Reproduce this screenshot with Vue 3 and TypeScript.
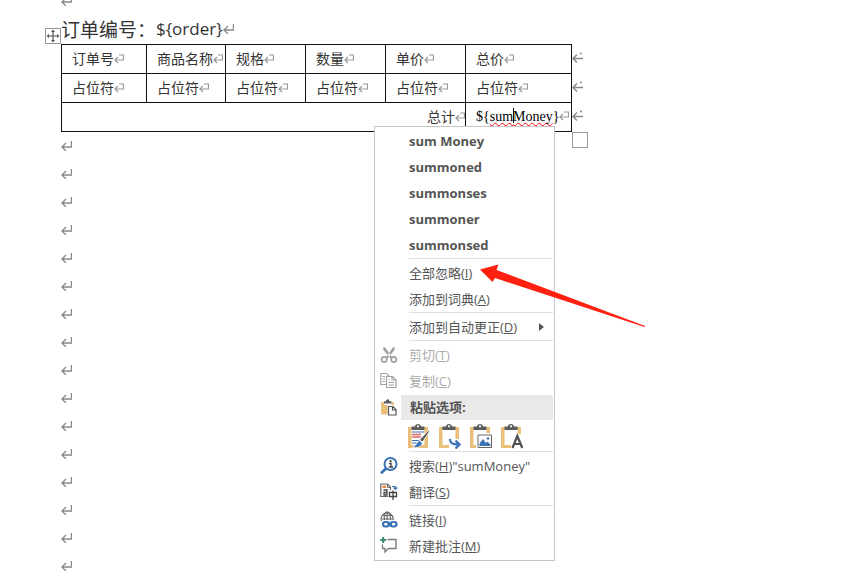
<script setup lang="ts">
interface MenuEntry {
  label: string
  accel?: string
  tail?: string
  icon?: 'cut' | 'copy' | 'search' | 'translate' | 'link' | 'comment'
  disabled?: boolean
  submenu?: boolean
}

const headers: string[] = ['订单号', '商品名称', '规格', '数量', '单价', '总价']
const placeholder = '占位符'
const orderField = '${order}'
const emptyParagraphs = 16

const suggestions: string[] = ['sum Money', 'summoned', 'summonses', 'summoner', 'summonsed']

const spelling: MenuEntry[] = [
  { label: '全部忽略', accel: 'I' },
  { label: '添加到词典', accel: 'A' },
]
const autoCorrect: MenuEntry[] = [{ label: '添加到自动更正', accel: 'D', submenu: true }]
const clipboard: MenuEntry[] = [
  { label: '剪切', accel: 'T', icon: 'cut', disabled: true },
  { label: '复制', accel: 'C', icon: 'copy', disabled: true },
]
const lookup: MenuEntry[] = [
  { label: '搜索', accel: 'H', tail: '"sumMoney"', icon: 'search' },
  { label: '翻译', accel: 'S', icon: 'translate' },
]
const insert: MenuEntry[] = [
  { label: '链接', accel: 'I', icon: 'link' },
  { label: '新建批注', accel: 'M', icon: 'comment' },
]

const upperGroups: MenuEntry[][] = [spelling, autoCorrect, clipboard]
const lowerGroups: MenuEntry[][] = [lookup, insert]

const pasteOptions = [
  { id: 'source', name: '保留源格式' },
  { id: 'merge', name: '合并格式' },
  { id: 'picture', name: '图片' },
  { id: 'text', name: '只保留文本' },
]
</script>

<template>
  <div class="page">
    <svg class="symbols" aria-hidden="true">
      <symbol id="para-mark" viewBox="0 0 11 10">
        <path d="M10.500 0V6H1M5 2L1 6L5 10" fill="none" stroke="#8a8a8a" stroke-width="1.400" />
      </symbol>
      <symbol id="cell-mark" viewBox="0 0 10 10">
        <path d="M5 1H9.500V6H1M4 3L1 6L4 9" fill="none" stroke="#999" stroke-width="1.200" />
      </symbol>
      <symbol id="row-mark" viewBox="0 0 12 12">
        <path d="M1 6.500H11M5 2.500L1 6.500L5 10.500M8 1.500H10" fill="none" stroke="#888" stroke-width="1.400" />
      </symbol>
      <symbol id="icon-cut" viewBox="0 0 18 18">
        <path d="M3.200 1L5.200 1.500L12.200 11.500L10.500 12.500L3.500 4ZM14.800 1L12.800 1.500L5.800 11.500L7.500 12.500L14.500 4Z" fill="#a0a0a0" />
        <g fill="none" stroke="#a0a0a0" stroke-width="1.600">
          <circle cx="4.200" cy="13.500" r="2.600" />
          <circle cx="13.800" cy="13.500" r="2.600" />
        </g>
      </symbol>
      <symbol id="icon-copy" viewBox="0 0 18 18">
        <g fill="#fff" stroke="#a3a3a3" stroke-width="1.200">
          <path d="M0.800 1.500H6.500L9.500 4.500V12.500H0.800Z" />
          <path d="M2.500 4.500H5M2.500 7H5M2.500 9.500H5" />
          <path d="M6.500 4.500H12.500L16 8V15.500H6.500Z" />
          <path d="M12 4.500V8H16M8.500 8H10M8.500 10.500H14M8.500 13H14" fill="none" />
        </g>
      </symbol>
      <symbol id="icon-search" viewBox="0 0 18 18">
        <circle cx="10.500" cy="7" r="6" fill="#fff" stroke="#3b73b5" stroke-width="2" />
        <path d="M6.300 11.200L1 16.200" stroke="#3b73b5" stroke-width="2.800" />
        <path d="M9 6.500H11V10M8.800 10H13" fill="none" stroke="#444" stroke-width="1.400" />
        <circle cx="10.600" cy="4.200" r="1.100" fill="#444" />
      </symbol>
      <symbol id="icon-translate" viewBox="0 0 18 18">
        <path d="M8 13.500H0.800V1H7.500L10.500 4V7" fill="#fff" stroke="#666" stroke-width="1.200" />
        <path d="M2.500 2.500H6V5H2.500Z" fill="#e8843c" />
        <path d="M7.500 1V4.500H10.500" fill="none" stroke="#666" />
        <path d="M3.500 7H7V12H4V9.500H7" fill="none" stroke="#444" stroke-width="1.300" />
        <path d="M12 3.500H15.500V6M13.500 4.500L15.500 6.500L17.300 4.500" fill="none" stroke="#3b73b5" stroke-width="1.200" />
        <path d="M9.500 9.500H16.500V13.500H9.500ZM13 7.500V17" fill="#fff" stroke="#444" stroke-width="1.300" />
      </symbol>
      <symbol id="icon-link" viewBox="0 0 18 18">
        <g fill="none" stroke="#666" stroke-width="1.100">
          <path d="M1.500 10A6 6 0 1 1 13 9" />
          <path d="M4.500 9C3.500 5 5 0.800 7.200 0.800S11 5 10.300 9M2 4.500H12.500M1.500 8H13M7.200 1V9" />
        </g>
        <g fill="none" stroke="#fff" stroke-width="4">
          <rect x="3" y="11" width="6" height="4.500" rx="2.200" />
          <rect x="10.500" y="11" width="6" height="4.500" rx="2.200" />
        </g>
        <g fill="none" stroke="#3b73b5" stroke-width="2.200">
          <rect x="3" y="11" width="6" height="4.500" rx="2.200" />
          <rect x="10.500" y="11" width="6" height="4.500" rx="2.200" />
          <path d="M7.500 13.200H12" />
        </g>
      </symbol>
      <symbol id="icon-comment" viewBox="0 0 18 18">
        <path d="M7.500 2.500H16V11.500H8.500L5 15V11.500H2.500V7.500" fill="none" stroke="#777" stroke-width="1.300" />
        <path d="M3.200 0V6M0.200 3H6.200" stroke="#3d8b6b" stroke-width="2" />
      </symbol>
      <symbol id="clipboard" viewBox="0 0 24 26">
        <path d="M1 4H21V25H1Z" fill="#eabf79" />
        <path d="M4.500 6H17.500V22H4.500Z" fill="#fff" />
        <path d="M4.500 7V3.500H8C8 0 14 0 14 3.500H17.500V7Z" fill="#5c5c5c" />
        <circle cx="11" cy="3.300" r="1.100" fill="#fff" />
      </symbol>
      <symbol id="icon-paste" viewBox="0 0 18 18">
        <path d="M1 3H14V15.500H1Z" fill="#eabf79" />
        <path d="M4 2H11.500V6H4Z" fill="#fff" />
        <path d="M4 4.500V2.300H6C6 -0.500 9.500 -0.500 9.500 2.300H11.500V4.500Z" fill="#5c5c5c" />
        <path d="M9 7.500H13L16 10.500V16H9Z" fill="#fff" stroke="#fff" stroke-width="3" />
        <path d="M8.500 7.500H13L16 10.500V16H8.500ZM12.500 7.500V11H16" fill="#fff" stroke="#555" stroke-width="1.200" />
      </symbol>
    </svg>

    <main class="document">
      <p class="paragraph first"><svg class="para-mark"><use href="#para-mark" /></svg></p>
      <h1 class="title">
        <span>订单编号：</span><span class="field">{{ orderField }}</span><svg class="para-mark"><use href="#para-mark" /></svg>
      </h1>

      <div class="table-area">
        <svg class="move-handle" viewBox="0 0 16 16" aria-hidden="true">
          <rect x="0.500" y="0.500" width="15" height="15" fill="#fff" stroke="#999" />
          <path d="M8 3V13M3 8H13" stroke="#555" stroke-width="1.200" />
          <path d="M8 1.500L10 4H6ZM8 14.500L10 12H6ZM1.500 8L4 6V10ZM14.500 8L12 6V10Z" fill="#555" />
        </svg>
        <table class="orders">
          <colgroup>
            <col class="c-order" /><col class="c-name" /><col class="c-mid" /><col class="c-mid" /><col class="c-mid" /><col />
          </colgroup>
          <thead>
            <tr>
              <th v-for="h in headers" :key="h" scope="col">{{ h }}<svg class="cell-mark"><use href="#cell-mark" /></svg></th>
            </tr>
          </thead>
          <tbody>
            <tr>
              <td v-for="h in headers" :key="h">{{ placeholder }}<svg class="cell-mark"><use href="#cell-mark" /></svg></td>
            </tr>
            <tr>
              <td colspan="5" class="total">总计<svg class="cell-mark"><use href="#cell-mark" /></svg></td>
              <td class="sum">${<span class="misspelled">sum<i class="caret"></i>Money</span>}<svg class="cell-mark"><use href="#cell-mark" /></svg></td>
            </tr>
          </tbody>
        </table>
        <div class="row-ends">
          <svg v-for="n in 3" :key="n" class="row-mark"><use href="#row-mark" /></svg>
        </div>
        <span class="resize-handle"></span>
      </div>

      <p v-for="n in emptyParagraphs" :key="n" class="paragraph"><svg class="para-mark"><use href="#para-mark" /></svg></p>
    </main>

    <div class="menu" role="menu">
      <button v-for="s in suggestions" :key="s" class="item suggestion" type="button" role="menuitem">
        <span class="icon"></span><span>{{ s }}</span>
      </button>

      <template v-for="(group, g) in upperGroups" :key="g">
        <hr class="separator" />
        <button v-for="e in group" :key="e.label" class="item" type="button" role="menuitem" :disabled="e.disabled">
          <svg v-if="e.icon" class="icon"><use :href="'#icon-' + e.icon" /></svg>
          <span v-else class="icon"></span>
          <span>{{ e.label }}(<u>{{ e.accel }}</u>)</span>
          <span v-if="e.submenu" class="chevron"></span>
        </button>
      </template>

      <div class="paste-heading">
        <svg class="icon"><use href="#icon-paste" /></svg>
        <span class="paste-title">粘贴选项:</span>
      </div>
      <div class="paste-options">
        <button v-for="p in pasteOptions" :key="p.id" class="paste" type="button" :aria-label="p.name">
          <svg viewBox="0 0 24 26">
            <use href="#clipboard" />
            <g v-if="p.id === 'source'">
              <path d="M5 9H17M5 17.500H13M5 20H11" stroke="#3b73b5" stroke-width="1.200" />
              <path d="M5 12L6.500 11L8 12L9.500 11L11 12L12.500 11L14 12M5 14.500L6.500 13.500L8 14.500L9.500 13.500L11 14.500L12.500 13.500L14 14.500" fill="none" stroke="#dc6262" stroke-width="1.200" />
              <path d="M23.500 7L15.500 19L12.500 17L21 8Z" fill="#555" stroke="#fff" stroke-width="0.800" />
              <path d="M12.500 17.500L15.500 20C14.500 24 10 25.500 5.500 24C9 23.500 9.500 19 12.500 17.500Z" fill="#3b73b5" stroke="#fff" stroke-width="0.800" />
            </g>
            <g v-else-if="p.id === 'merge'">
              <path d="M11 16H24V26H11Z" fill="#fff" />
              <path d="M12 16C12 20 14 21.500 20 21.500M17.500 17.500L21.500 21.500L17.500 25.500" fill="none" stroke="#3b73b5" stroke-width="2.300" />
            </g>
            <g v-else-if="p.id === 'picture'">
              <path d="M8.500 11.500H22.500V24.500H8.500Z" fill="#fff" stroke="#fff" stroke-width="3" />
              <path d="M9 12H22.500V24.500H9Z" fill="#fff" stroke="#666" />
              <path d="M10.500 23V20.500L14 16L17 20L18.500 18.500L21.500 21.500V23Z" fill="#3b73b5" />
              <circle cx="19" cy="15.500" r="1.300" fill="#3b73b5" />
            </g>
            <g v-else>
              <path d="M11 11H24V26H11Z" fill="#fff" />
              <path d="M12.500 25L17.300 13L22.300 25M14.300 21H20.500" fill="none" stroke="#4f4f4f" stroke-width="2.200" />
            </g>
          </svg>
        </button>
      </div>

      <template v-for="(group, g) in lowerGroups" :key="g">
        <hr class="separator" />
        <button v-for="e in group" :key="e.label" class="item" type="button" role="menuitem">
          <svg class="icon"><use :href="'#icon-' + e.icon" /></svg>
          <span>{{ e.label }}(<u>{{ e.accel }}</u>){{ e.tail }}</span>
        </button>
      </template>
    </div>

    <svg class="pointer" viewBox="0 0 166 64" aria-hidden="true">
      <path d="M0 5.500L18.500 0.500L16.500 6L165 62L164.500 63L15 14L12.500 18Z" fill="#ff2010" />
    </svg>
  </div>
</template>

<style>
body {
  margin: 0;
  background: #fff;
}
</style>

<style scoped>
.page {
  position: relative;
  height: 100vh;
  overflow: hidden;
  font-family: "Noto Sans CJK SC", sans-serif;
  color: #333;
}
.symbols {
  position: absolute;
  width: 0;
  height: 0;
}
.document {
  padding-left: 61px;
}
.paragraph {
  display: flex;
  align-items: center;
  height: 28px;
  margin: 0;
}
.paragraph.first {
  height: 18px;
  align-items: flex-start;
  margin-top: -4px;
}
.para-mark {
  width: 11px;
  height: 10px;
  flex: none;
}
.title {
  display: flex;
  align-items: center;
  height: 30px;
  margin: 0;
  font-size: 19px;
  font-weight: 400;
  line-height: 30px;
}
.field {
  font-family: "Open Sans", sans-serif;
  font-size: 17px;
}
.table-area {
  position: relative;
  display: flex;
}
.orders {
  width: 511px;
  table-layout: fixed;
  border-collapse: collapse;
  font-size: 14px;
  line-height: 26px;
}
.c-order {
  width: 85px;
}
.c-name {
  width: 79px;
}
.c-mid {
  width: 80px;
}
.orders th,
.orders td {
  height: 28px;
  padding: 0 0 2px 10px;
  border: 1px solid #111;
  box-sizing: border-box;
  font-weight: 400;
  text-align: left;
  white-space: nowrap;
}
.orders .total {
  text-align: right;
}
.orders .sum {
  padding-bottom: 0;
  font-family: "Liberation Serif", serif;
  line-height: 28px;
  color: #000;
}
.cell-mark {
  width: 10px;
  height: 10px;
}
.misspelled {
  text-decoration: underline wavy #f00 1px;
  text-decoration-skip-ink: none;
  text-underline-offset: 1px;
}
.caret {
  display: inline-block;
  width: 1px;
  height: 15px;
  margin-right: -1px;
  background: #000;
  vertical-align: -2px;
}
.row-ends {
  display: grid;
  grid-template-rows: repeat(3, 1fr);
  align-items: center;
  padding-bottom: 2px;
}
.row-mark {
  width: 12px;
  height: 12px;
}
.move-handle {
  position: absolute;
  right: 100%;
  bottom: 100%;
  width: 16px;
  height: 16px;
}
.resize-handle {
  position: absolute;
  top: 100%;
  left: 511px;
  width: 14px;
  height: 14px;
  border: 1px solid #999;
  background: #fff;
}

.menu {
  position: absolute;
  top: 126px;
  left: 374px;
  width: 178px;
  padding: 1px 1px 1px 0;
  border: 1px solid #c6c6c6;
  background: #fff;
  color: #555;
  font-family: "Open Sans", "Noto Sans CJK SC", sans-serif;
  font-size: 13px;
}
.item {
  display: flex;
  align-items: center;
  gap: 11px;
  width: 100%;
  height: 26px;
  padding: 0 9px 0 5px;
  border: 0;
  background: none;
  color: inherit;
  font: inherit;
  line-height: 26px;
  text-align: left;
  white-space: nowrap;
}
.item:disabled {
  color: #aaa;
}
.suggestion {
  font-weight: 700;
}
.icon {
  flex: none;
  width: 18px;
  height: 18px;
}
.separator {
  height: 1px;
  margin: 0 0 1px 34px;
  border: 0;
  background: #dedede;
}
.chevron {
  margin-left: auto;
  border: 4px solid transparent;
  border-left: 5px solid #555;
  border-right: 0;
}
.paste-heading {
  display: flex;
  align-items: center;
  gap: 3px;
  margin-top: 1px;
  padding-left: 5px;
}
.paste-title {
  flex: 1;
  padding-left: 9px;
  background: #e9e9e9;
  font-weight: 700;
  line-height: 25px;
}
.paste-options {
  display: flex;
  align-items: center;
  gap: 7px;
  height: 31px;
  padding-left: 32px;
}
.paste {
  width: 24px;
  height: 26px;
  padding: 0;
  border: 0;
  background: none;
}
.paste svg {
  display: block;
  width: 24px;
  height: 26px;
}
.pointer {
  position: absolute;
  top: 264px;
  left: 480px;
  width: 166px;
  height: 64px;
}
</style>
